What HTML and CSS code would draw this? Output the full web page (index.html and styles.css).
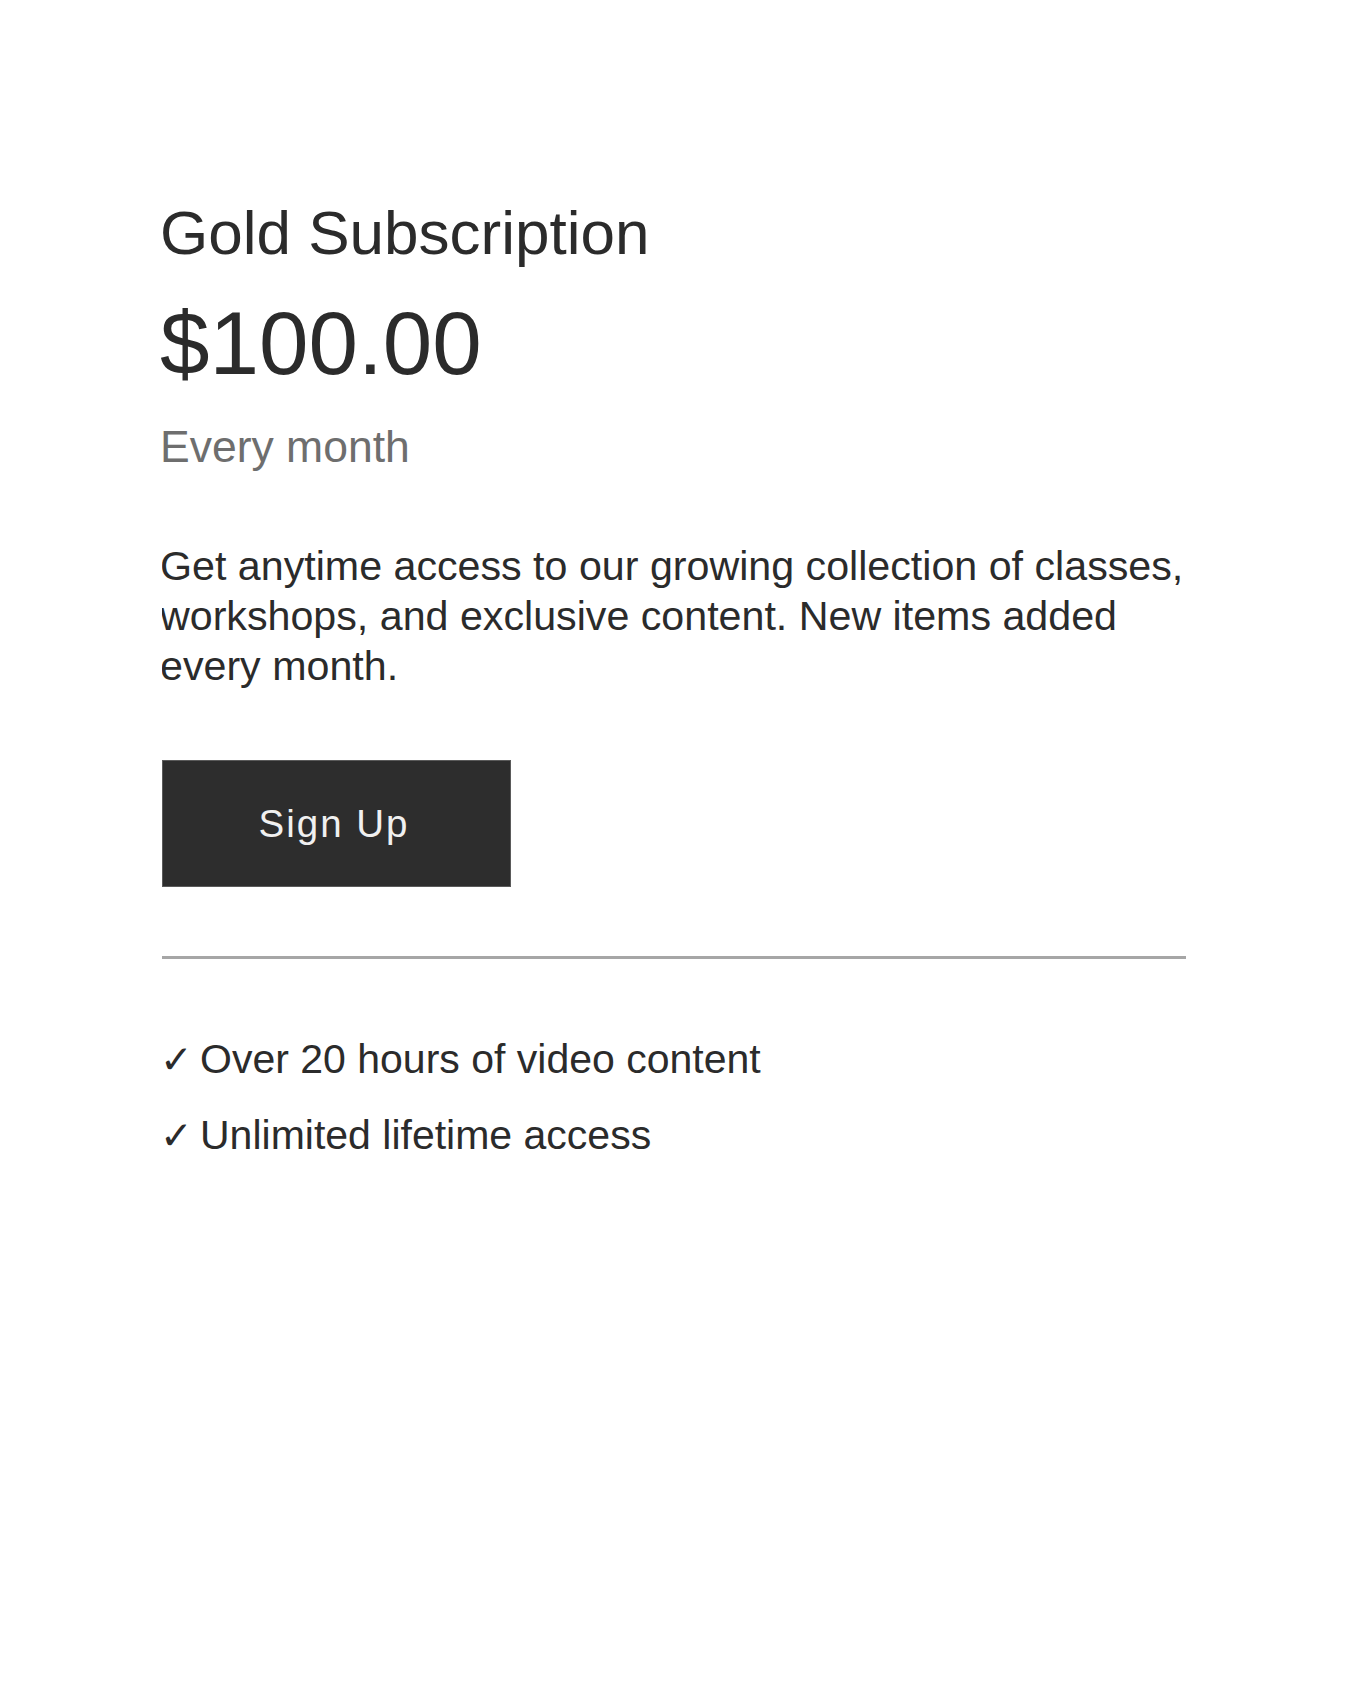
FILE: index.html
```html
<!DOCTYPE html>
<html lang="en">
<head>
<meta charset="utf-8">
<title>Gold Subscription</title>
<link rel="stylesheet" href="styles.css">
</head>
<body>
<main class="card">
  <h1 class="title">Gold Subscription</h1>
  <div class="price">$100.00</div>
  <div class="period">Every month</div>
  <p class="desc"><span class="desc-text">Get anytime access to our growing collection of classes, workshops, and exclusive content. New items added every month.</span></p>
  <button class="signup" type="button">Sign Up</button>
  <hr class="divider">
  <ul class="features">
    <li><span class="check">✓</span>Over 20 hours of video content</li>
    <li><span class="check">✓</span>Unlimited lifetime access</li>
  </ul>
</main>
</body>
</html>
```
FILE: styles.css
```css
html, body {
  margin: 0;
  background: #ffffff;
}
body {
  font-family: "Liberation Sans", Arial, sans-serif;
  color: #2b2b2b;
}
.card {
  margin-left: 160px;
  width: 1030px;
  padding-top: 197px;
}
.title {
  font-size: 62px;
  line-height: 72px;
  font-weight: normal;
  margin: 0;
}
.price {
  font-size: 89px;
  line-height: 100px;
  margin: 24px 0 0;
}
.period {
  font-size: 44.5px;
  line-height: 52px;
  color: #6e6e6e;
  margin: 28px 0 0;
}
.desc {
  font-size: 41.2px;
  line-height: 50px;
  margin: 68px 0 0 2px;
  overflow: hidden;
}
.desc-text {
  display: block;
  margin-left: -2px;
}
.signup {
  display: block;
  margin: 69px 0 0 2px;
  width: 349px;
  height: 127px;
  padding: 0 5px 0 0;
  background: #2d2d2d;
  color: #f0f0f0;
  border: 1px solid #5a5a5a;
  font-family: "Liberation Sans", Arial, sans-serif;
  font-size: 38.5px;
  letter-spacing: 2px;
}
.divider {
  margin: 69px 0 0 2px;
  border: 0;
  height: 3px;
  width: 1024px;
  background: #a6a6a6;
}
.features {
  list-style: none;
  margin: 76px 0 0;
  padding: 0;
  font-size: 41px;
  line-height: 48px;
}
.features li + li {
  margin-top: 27px;
}
.check {
  display: inline-block;
  width: 40px;
  font-family: "DejaVu Sans", sans-serif;
  font-size: 39px;
}
```
